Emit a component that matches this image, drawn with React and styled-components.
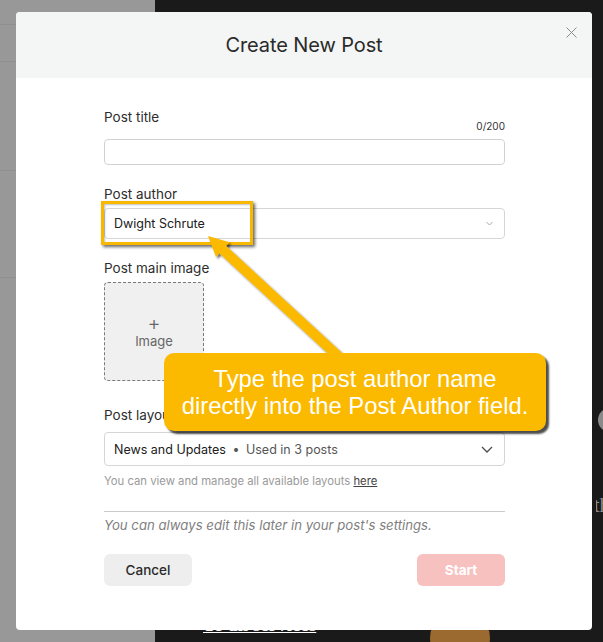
import React from "react";
import styled, { createGlobalStyle } from "styled-components";

const GlobalStyle = createGlobalStyle`
  html, body {
    margin: 0;
    padding: 0;
    overflow: hidden;
  }
  body {
    font-family: Inter, "Noto Sans", sans-serif;
  }
`;

const App = () => {
  return (
    <Page>
      <GlobalStyle />
      <LeftPane>
        <Band $h={24} />
        <Band $h={36} />
        <Band $h={108} />
        <Band $h={106} />
      </LeftPane>
      <RightPane>
        <EdgeStack>
          <GrayDot />
          <EdgeText>th</EdgeText>
        </EdgeStack>
        <BottomRow>
          <BgLink>To all services</BgLink>
          <BgCircle />
        </BottomRow>
      </RightPane>

      <Modal>
        <Header>
          <Title>Create New Post</Title>
          <CloseButton aria-label="close">
            <svg width="11" height="11" viewBox="0 0 11 11">
              <path d="M0.5 0.5 L10.5 10.5 M10.5 0.5 L0.5 10.5" stroke="#8a8d8f" strokeWidth="1" fill="none" />
            </svg>
          </CloseButton>
        </Header>
        <Body>
          <LabelRow>
            <Label>Post title</Label>
            <Counter>0/200</Counter>
          </LabelRow>
          <TextInput />

          <Label $top={19}>Post author</Label>
          <Select $h={31} $top={4}>
            <SelectValue>Dwight Schrute</SelectValue>
            <svg width="7" height="5" viewBox="0 0 7 5">
              <path d="M0.5 1 L3.5 4 L6.5 1" stroke="#a6a9ab" strokeWidth="1" fill="none" />
            </svg>
          </Select>

          <Label $top={19}>Post main image</Label>
          <ImageBox>
            <Plus>+</Plus>
            <ImageText>Image</ImageText>
          </ImageBox>

          <Label $top={24}>Post layout</Label>
          <Select $h={34} $top={7}>
            <SelectValue>
              News and Updates <Dot>•</Dot> <Muted>Used in 3 posts</Muted>
            </SelectValue>
            <svg width="12" height="7" viewBox="0 0 12 7">
              <path d="M1 1 L6 6 L11 1" stroke="#4a4d50" strokeWidth="1.3" fill="none" />
            </svg>
          </Select>
          <Help>
            You can view and manage all available layouts <HelpLink>here</HelpLink>
          </Help>

          <Divider />
          <Note>You can always edit this later in your post's settings.</Note>

          <Buttons>
            <Button>Cancel</Button>
            <Button $primary>Start</Button>
          </Buttons>
        </Body>
      </Modal>

      <Highlight />
      <ArrowLayer width="603" height="642" viewBox="0 0 603 642">
        <defs>
          <filter id="arrowShadow" x="-20%" y="-20%" width="140%" height="140%">
            <feDropShadow dx="2" dy="2" stdDeviation="1.2" floodColor="#000" floodOpacity="0.55" />
          </filter>
        </defs>
        <polygon
          points="208,236 229.5,242.3 226.1,245.9 341.4,352.3 334.6,359.7 219.3,253.3 216,257"
          fill="#fbb900"
          filter="url(#arrowShadow)"
        />
      </ArrowLayer>
      <Callout>
        <span>Type the post author name</span>
        <span>directly into the Post Author field.</span>
      </Callout>
    </Page>
  );
};

export default App;

const Page = styled.div`
  position: relative;
  width: 603px;
  height: 642px;
  display: flex;
  overflow: hidden;
`;

const LeftPane = styled.div`
  width: 155px;
  background: #989898;
  display: flex;
  flex-direction: column;
`;

const Band = styled.div`
  height: ${(p) => p.$h}px;
  border-bottom: 1px solid #8f8f8f;
  flex-shrink: 0;
`;

const RightPane = styled.div`
  flex: 1;
  background: #1a1a1a;
  display: flex;
  flex-direction: column;
`;

const EdgeStack = styled.div`
  align-self: flex-end;
  width: 7px;
  margin-top: 408px;
  display: flex;
  flex-direction: column;
  overflow: hidden;
`;

const GrayDot = styled.div`
  width: 24px;
  height: 24px;
  border-radius: 50%;
  background: #8a8a8a;
  margin-left: 2px;
`;

const EdgeText = styled.div`
  margin-top: 62px;
  font-family: "Liberation Serif", serif;
  font-size: 20px;
  color: #8e8e8e;
  margin-left: -2px;
  white-space: nowrap;
`;

const BottomRow = styled.div`
  margin-top: auto;
  display: flex;
  align-items: flex-start;
  padding-left: 48px;
  height: 24px;
`;

const BgLink = styled.div`
  font-family: "Liberation Serif", serif;
  font-weight: bold;
  font-size: 19px;
  color: #fff;
  text-decoration: underline;
  line-height: 22px;
  width: 227px;
  margin-top: -4px;
`;

const BgCircle = styled.div`
  width: 60px;
  height: 60px;
  border-radius: 50%;
  background: #9a6a30;
  margin-top: -10px;
`;

const Modal = styled.div`
  position: absolute;
  left: 16px;
  top: 12px;
  width: 576px;
  height: 618px;
  background: #fff;
  border-radius: 4px;
  overflow: hidden;
  display: flex;
  flex-direction: column;
  z-index: 1;
`;

const Header = styled.div`
  position: relative;
  height: 66px;
  background: #f4f6f5;
  display: flex;
  align-items: center;
  justify-content: center;
  flex-shrink: 0;
`;

const Title = styled.div`
  font-size: 20px;
  color: #2a2a2a;
  letter-spacing: -0.1px;
`;

const CloseButton = styled.div`
  position: absolute;
  right: 15px;
  top: 15px;
  width: 11px;
  height: 11px;
  display: flex;
`;

const Body = styled.div`
  padding: 29px 87px 0 88px;
  display: flex;
  flex-direction: column;
`;

const LabelRow = styled.div`
  display: flex;
  justify-content: space-between;
  height: 32px;
`;

const Label = styled.div`
  font-size: 13.5px;
  line-height: 20px;
  color: #2d2d2d;
  margin-top: ${(p) => p.$top || 0}px;
  align-self: flex-start;
`;

const Counter = styled.div`
  font-size: 10px;
  line-height: 14px;
  color: #333;
  align-self: flex-end;
  margin-bottom: 6px;
`;

const TextInput = styled.div`
  height: 26px;
  box-sizing: border-box;
  border: 1px solid #cfd3d6;
  border-radius: 4px;
`;

const Select = styled.div`
  height: ${(p) => p.$h}px;
  margin-top: ${(p) => p.$top}px;
  box-sizing: border-box;
  border: 1px solid #d3d6d8;
  border-radius: 4px;
  display: flex;
  align-items: center;
  justify-content: space-between;
  padding: 0 11px 0 9px;
`;

const SelectValue = styled.div`
  font-size: 12.5px;
  color: #202020;
  white-space: nowrap;
`;

const Dot = styled.span`
  color: #555;
  margin: 0 3px;
`;

const Muted = styled.span`
  color: #555;
`;

const ImageBox = styled.div`
  margin-top: 4px;
  width: 100px;
  height: 99px;
  box-sizing: border-box;
  border: 1px dashed #7a7a7a;
  border-radius: 4px;
  background: #f0f0f0;
  display: flex;
  flex-direction: column;
  align-items: center;
  justify-content: center;
  gap: 1px;
`;

const Plus = styled.div`
  font-size: 20px;
  line-height: 18px;
  color: #666;
  font-weight: 300;
`;

const ImageText = styled.div`
  font-size: 13px;
  line-height: 16px;
  color: #666;
`;

const Help = styled.div`
  margin-top: 8px;
  font-size: 11.3px;
  line-height: 14px;
  color: #9a9a9a;
`;

const HelpLink = styled.span`
  color: #444;
  text-decoration: underline;
`;

const Divider = styled.div`
  margin-top: 23px;
  height: 1px;
  background: #cacaca;
`;

const Note = styled.div`
  margin-top: 4px;
  font-size: 13.2px;
  line-height: 18px;
  font-style: italic;
  color: #7f7f7f;
`;

const Buttons = styled.div`
  margin-top: 20px;
  display: flex;
  justify-content: space-between;
`;

const Button = styled.div`
  width: 88px;
  height: 32px;
  border-radius: 6px;
  display: flex;
  align-items: center;
  justify-content: center;
  font-size: 13.5px;
  font-weight: ${(p) => (p.$primary ? 700 : 500)};
  color: ${(p) => (p.$primary ? "#fff" : "#2a2a2a")};
  background: ${(p) => (p.$primary ? "#f7c1bf" : "#eeeeee")};
`;

const Highlight = styled.div`
  position: absolute;
  left: 101px;
  top: 201px;
  width: 152px;
  height: 44px;
  box-sizing: border-box;
  border: 3px solid #f9b800;
  box-shadow: 2px 2px 3px rgba(0, 0, 0, 0.6), inset 1px 1px 2px rgba(0, 0, 0, 0.25);
  z-index: 2;
`;

const ArrowLayer = styled.svg`
  position: absolute;
  left: 0;
  top: 0;
  pointer-events: none;
  z-index: 3;
`;

const Callout = styled.div`
  position: absolute;
  left: 164px;
  top: 353px;
  width: 382px;
  height: 78px;
  box-sizing: border-box;
  background: #fbb900;
  border-radius: 10px;
  box-shadow: 3px 3px 2px rgba(0, 0, 0, 0.7);
  display: flex;
  flex-direction: column;
  align-items: center;
  justify-content: center;
  font-family: "Liberation Sans", Arial, sans-serif;
  font-size: 23.8px;
  line-height: 27px;
  color: #fff;
  white-space: nowrap;
  z-index: 4;
`;
